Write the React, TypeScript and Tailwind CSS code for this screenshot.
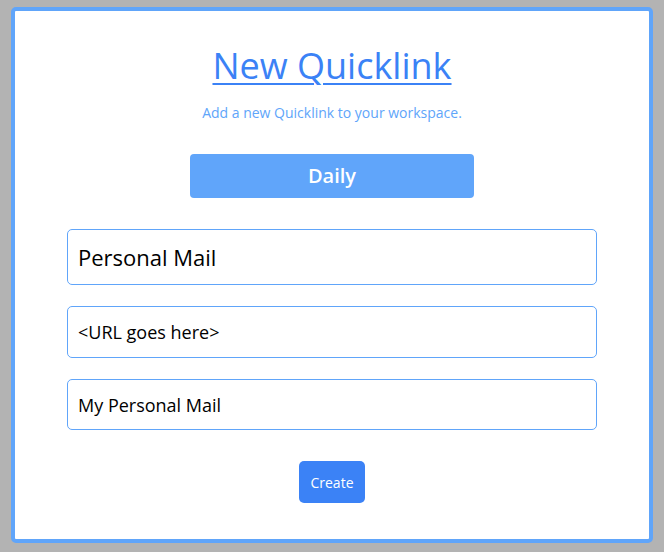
export default function App() {
  return (
    <div
      className="h-[552px] w-[664px] bg-[#b3b3b3] pl-[11px] pr-[11px] pt-[7px]"
      style={{ fontFamily: '"Open Sans", "Noto Sans", sans-serif' }}
    >
      <div className="flex h-[536px] flex-col items-center rounded-[5px] border-4 border-[#60a5fa] bg-white">
        <h1 className="mt-[33px] text-[36px] leading-[44px] text-[#3b82f6] underline decoration-2 underline-offset-[4px]">
          New Quicklink
        </h1>
        <p className="mt-[15px] text-[14px] leading-[20px] text-[#60a5fa]">
          Add a new Quicklink to your workspace.
        </p>
        <button className="mt-[31px] h-[44px] w-[284px] rounded-[4px] bg-[#60a5fa] text-[20px] font-semibold text-white">
          Daily
        </button>
        <div className="mt-[31px] flex w-[530px] flex-col gap-[21px]">
          <input
            className="h-[56px] w-full rounded-[5px] border border-[#60a5fa] px-[10px] text-[22px] text-black outline-none"
            defaultValue="Personal Mail"
          />
          <input
            className="h-[52px] w-full rounded-[5px] border border-[#60a5fa] px-[10px] text-[18px] text-black outline-none"
            defaultValue="<URL goes here>"
          />
          <input
            className="h-[51px] w-full rounded-[5px] border border-[#60a5fa] px-[10px] text-[18px] text-black outline-none"
            defaultValue="My Personal Mail"
          />
        </div>
        <button className="mt-[31px] h-[42px] w-[66px] rounded-[5px] bg-[#3b82f6] text-[14px] font-medium text-white">
          Create
        </button>
      </div>
    </div>
  )
}
